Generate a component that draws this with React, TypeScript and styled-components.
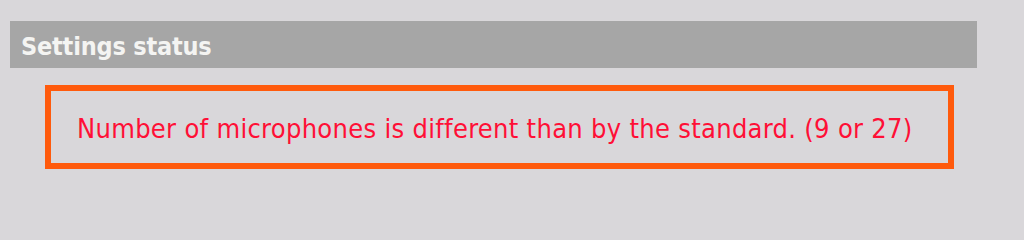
import React from 'react';
import styled, { createGlobalStyle } from 'styled-components';

const GlobalStyle = createGlobalStyle`
  html, body {
    margin: 0;
    padding: 0;
    background: #d9d7da;
  }
  body {
    font-family: "DejaVu Sans Condensed", "DejaVu Sans", sans-serif;
  }
`;

const Page = styled.div`
  width: 1024px;
  height: 211px;
  padding: 21px 47px 0 10px;
  box-sizing: border-box;
  background: #d9d7da;
  overflow: hidden;
`;

const SectionHeader = styled.div`
  height: 47px;
  box-sizing: border-box;
  display: flex;
  align-items: center;
  padding: 3px 0 0 11px;
  background: #a6a6a6;
  color: #f4f4f2;
  font-size: 25px;
  font-weight: bold;
  letter-spacing: -0.2px;
`;

const Body = styled.div`
  padding: 17px 23px 0 35px;
`;

const StatusBox = styled.div`
  height: 84px;
  box-sizing: border-box;
  border: 6px solid #ff5a0c;
  display: flex;
  align-items: center;
  padding: 2px 0 0 26px;
`;

const StatusText = styled.span`
  color: #ff0f36;
  font-size: 27px;
  letter-spacing: 0.3px;
`;

export default function App() {
  return (
    <>
      <GlobalStyle />
      <Page>
        <SectionHeader>Settings status</SectionHeader>
        <Body>
          <StatusBox>
            <StatusText>
              Number of microphones is different than by the standard. (9 or 27)
            </StatusText>
          </StatusBox>
        </Body>
      </Page>
    </>
  );
}
